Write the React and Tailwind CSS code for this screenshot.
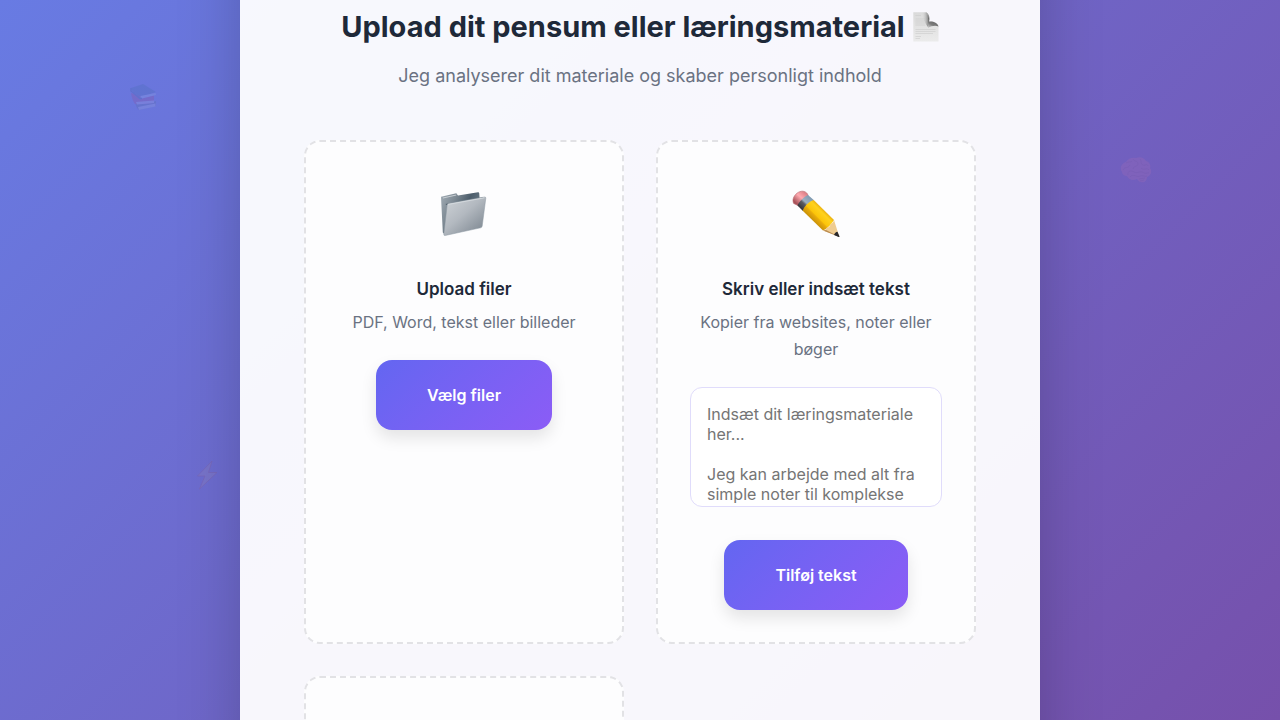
import React from "react";

function PageIcon() {
  return (
    <svg viewBox="0 0 26 30" className="h-[30px] w-[26px]" aria-hidden="true">
      <defs>
        <linearGradient id="pg" x1="0" y1="0" x2="0" y2="1">
          <stop offset="0" stopColor="#dadada" />
          <stop offset="1" stopColor="#ebebeb" />
        </linearGradient>
        <linearGradient id="curl" gradientUnits="userSpaceOnUse" x1="22" y1="6" x2="17" y2="16">
          <stop offset="0" stopColor="#a8a8a8" />
          <stop offset="0.3" stopColor="#6a6a6a" />
          <stop offset="0.65" stopColor="#7c7c7c" />
          <stop offset="1" stopColor="#c4c4c4" />
        </linearGradient>
        <linearGradient id="fold" gradientUnits="userSpaceOnUse" x1="9" y1="6" x2="16" y2="6">
          <stop offset="0" stopColor="#d8d8d8" stopOpacity="0" />
          <stop offset="1" stopColor="#777" />
        </linearGradient>
      </defs>
      <path d="M.3 .3H13C15.500 1.500 16.500 5.500 16 9.500C20 9 24.500 10.500 25.500 14V29.600H.3Z" fill="url(#pg)" />
      <path d="M9 .5H13C15.500 1.500 16.500 5.500 16 10L15 15C12 12 10 6 9 .5Z" fill="url(#fold)" />
      <path d="M12.500 .3C16.500 1.500 17 6 16 9.500C20 9 24.500 10.500 25.500 14.500C22.500 13.300 18.500 13.800 15 16C15.500 9 15.800 3 12.500 .3Z" fill="url(#curl)" />
      <path d="M2.500 3.500H8M2.500 7H12M2.500 9H12.500M2.500 11H12.500M2.500 13H12.500M2.500 17.500H22.500M2.500 19.500H22.500M2.500 21.500H20M2.500 24.500H8M2.500 26.500H7" stroke="#cbcbcb" strokeWidth=".6" />
    </svg>
  );
}

function FolderIcon() {
  return (
    <svg viewBox="0 0 48 48" className="size-12" aria-hidden="true">
      <defs>
        <linearGradient id="fb" x1="0" y1="0" x2="1" y2="0.5">
          <stop offset="0" stopColor="#a2adb6" />
          <stop offset="0.35" stopColor="#7d8993" />
          <stop offset="0.65" stopColor="#4c5d6b" />
          <stop offset="1" stopColor="#6f808c" />
        </linearGradient>
        <linearGradient id="ff" gradientUnits="userSpaceOnUse" x1="12" y1="12" x2="36" y2="40">
          <stop offset="0" stopColor="#c6cbd0" />
          <stop offset="0.45" stopColor="#b3b9c0" />
          <stop offset="1" stopColor="#8a939c" />
        </linearGradient>
      </defs>
      <path d="M1 6.800L16.300 3.300L18 5.500L38 2.200Q39 2 39.200 3L39.600 8L8 41L4.800 44.500L2.800 42.500Z" fill="url(#fb)" />
      <path d="M3 8L16.300 5" stroke="#c8ced3" strokeWidth="1" />
      <path d="M5.500 14L43 7.200L42 10L8 16Z" fill="#455563" />
      <path d="M8.300 13.500L44.600 7Q46 6.900 45.800 8.300L42.200 36Q42 37.400 40.600 37.800L5.200 45.500Q3.700 45.700 3.800 44.300L7.200 15Q7.300 13.700 8.300 13.500Z" fill="url(#ff)" stroke="#8d98a2" strokeWidth=".5" />
      <path d="M7.900 15.300Q8 14.400 8.700 14.300L44.600 7.800" fill="none" stroke="#d9dee2" strokeWidth=".8" />
    </svg>
  );
}

function PencilIcon() {
  return (
    <svg viewBox="0 0 48 48" className="size-12" aria-hidden="true">
      <defs>
        <linearGradient id="pb" gradientUnits="userSpaceOnUse" x1="32" y1="19" x2="20" y2="31">
          <stop offset="0" stopColor="#e5a80b" />
          <stop offset="0.22" stopColor="#ffd21d" />
          <stop offset="0.58" stopColor="#fcc509" />
          <stop offset="0.66" stopColor="#e9ac0a" />
          <stop offset="1" stopColor="#c48d07" />
        </linearGradient>
        <linearGradient id="pm" gradientUnits="userSpaceOnUse" x1="19" y1="8" x2="9" y2="19">
          <stop offset="0" stopColor="#809bb2" />
          <stop offset="0.45" stopColor="#9db0c0" />
          <stop offset="0.6" stopColor="#5b5c63" />
          <stop offset="1" stopColor="#343439" />
        </linearGradient>
        <linearGradient id="pe" gradientUnits="userSpaceOnUse" x1="12" y1="2" x2="3" y2="12">
          <stop offset="0" stopColor="#df8289" />
          <stop offset="0.45" stopColor="#ffabb1" />
          <stop offset="1" stopColor="#a9535a" />
        </linearGradient>
      </defs>
      <path d="M1.700 13.500C0 10 1.500 6 5 3.200C8.500 .5 13 .3 15.500 4L16.500 7C12 8 8.500 11.500 7 16Z" fill="url(#pe)" stroke="#b7646b" strokeWidth=".6" />
      <path d="M16 5C12 7 7.500 11 5.500 15.500L11 21C13.500 16 17 12.500 22 10.300Z" fill="url(#pm)" />
      <path d="M21.700 10C16.500 12 12.500 16 10.700 20.700L31 40.500Q37.500 37.500 42 30Z" fill="url(#pb)" />
      <path d="M42 30L47.300 46.800L31 40.500C33 40.500 34.300 39.300 34.500 37.700C36.700 37.700 38.300 36.300 38.500 33.800C40.200 34 41.500 32.200 42 30Z" fill="#efcc91" />
      <path d="M34 40L47 46.800L31 40.500Z" fill="#ba8b50" />
      <path d="M45.500 41.700L47.500 46.500Q47.500 47.300 46.600 47L42 45C42.500 43 44 41.900 45.500 41.700Z" fill="#28282c" />
    </svg>
  );
}

function BooksIcon() {
  return (
    <svg viewBox="0 0 28 28" className="size-7 opacity-15" aria-hidden="true">
      <path d="M5 19L19 20L26 18V23L9 27Q6 25 5 19Z" fill="#49637c" />
      <path d="M8 24L25.500 20.500V23.500L9 27Z" fill="#b9c6dc" />
      <path d="M1 10L16 14L24 12V20L5 21Q2 17 1 10Z" fill="#b0306c" />
      <path d="M6 19L24 17.500V20L7 21.500Z" fill="#cbb9d9" />
      <path d="M1 5L13 1L26 9L11 14Q2 10 1 5Z" fill="#2d6491" />
      <path d="M10.500 13Q10 15 12 15.500L26 12L25.500 10Z" fill="#b3cfe6" />
      <path d="M1 5V8L10 15.500L12 15.500" fill="none" stroke="#22557e" strokeWidth="1.500" />
    </svg>
  );
}

function BrainIcon() {
  return (
    <svg viewBox="0 0 32 28" className="h-7 w-8 opacity-15" aria-hidden="true">
      <path d="M2 16C-1 12 2 7 6 6C8 2 13 1 16 2C21 0 25 3 26 5C30 6 31 10 30 12C33 16 30 20 27 21C27 25 24 27 21 26C19 26 18 24 17 23C13 25 9 24 7 20C4 20 2 18 2 16Z" fill="#cf79ad" />
      <path d="M3 14C5 10 8 13 10 9M6 7C9 5 10 7 12 5M13 3C14 6 18 4 18 8C18 11 14 9 13 13M20 3C22 5 20 8 23 9C26 10 27 7 28 10M21 12C24 15 27 11 29 14M8 19C7 15 11 14 14 16C18 18 20 14 24 17C27 18 28 16 29 17M10 21C13 17 17 22 20 20C23 19 25 21 27 20M19 23L25 22M20 25L24 24" fill="none" stroke="#a55488" strokeWidth=".8" />
    </svg>
  );
}

function BoltIcon() {
  return (
    <svg viewBox="0 0 22 30" className="h-[30px] w-[22px] opacity-20" aria-hidden="true">
      <path d="M16 1L1.500 16H9L3.500 29L21 12.500H12.500Z" fill="#a392b0" stroke="#9c5468" strokeWidth=".8" strokeLinejoin="round" />
    </svg>
  );
}

const cardClass =
  "flex flex-col items-center rounded-2xl border-2 border-dashed border-[#e2e2e5] bg-[#fdfdfe] p-8 text-center";

function Card({ icon, title, text, children }) {
  return (
    <section className={cardClass}>
      <div className="mb-6 flex h-20 items-center justify-center">{icon}</div>
      <h3 className="mb-2 text-[17px] leading-[23px] font-semibold text-gray-800">{title}</h3>
      <p className="mb-6 leading-[27px] text-gray-500">{text}</p>
      {children}
    </section>
  );
}

function ActionButton({ children }) {
  return (
    <button
      type="button"
      className="rounded-2xl bg-linear-135 from-[#6366f1] to-[#8b5cf6] px-[51px] py-5 leading-[30px] font-semibold text-white shadow-[0_8px_16px_rgba(0,0,0,0.1)]"
    >
      {children}
    </button>
  );
}

export default function App() {
  return (
    <div className="relative h-screen overflow-hidden bg-[linear-gradient(135deg,#687be3_0%,#7650ab_100%)] font-['Inter',sans-serif] text-base">
      <div className="absolute top-[83px] left-[10%] ml-0.5">
        <BooksIcon />
      </div>
      <div className="absolute top-[156px] right-[10%]">
        <BrainIcon />
      </div>
      <div className="absolute top-[460px] left-[15%] ml-1">
        <BoltIcon />
      </div>

      <main className="relative mx-auto -mt-24 max-w-[800px] bg-white/95 px-16 pt-[103px] pb-24 shadow-[0_20px_60px_rgba(0,0,0,0.2)]">
        <header className="mb-12 text-center">
          <h2 className="mb-3 flex items-center justify-center gap-2 text-[29px] leading-10 font-bold text-gray-800">
            Upload dit pensum eller læringsmaterial
            <PageIcon />
          </h2>
          <p className="text-lg leading-[33px] text-gray-500">
            Jeg analyserer dit materiale og skaber personligt indhold
          </p>
        </header>

        <div className="grid grid-cols-2 gap-8">
          <Card icon={<FolderIcon />} title="Upload filer" text="PDF, Word, tekst eller billeder">
            <ActionButton>Vælg filer</ActionButton>
          </Card>

          <Card icon={<PencilIcon />} title="Skriv eller indsæt tekst" text="Kopier fra websites, noter eller bøger">
            <textarea
              aria-label="Skriv eller indsæt tekst"
              className="mb-[33px] block h-[120px] w-full resize-none overflow-hidden rounded-xl border border-[#e0dcfb] bg-white p-4 leading-5 text-gray-800 placeholder:text-[#757575]"
              placeholder={"Indsæt dit læringsmateriale her...\n\nJeg kan arbejde med alt fra simple noter til komplekse"}
            />
            <ActionButton>Tilføj tekst</ActionButton>
          </Card>

          <section className={`${cardClass} min-h-72`} />
        </div>
      </main>
    </div>
  );
}
